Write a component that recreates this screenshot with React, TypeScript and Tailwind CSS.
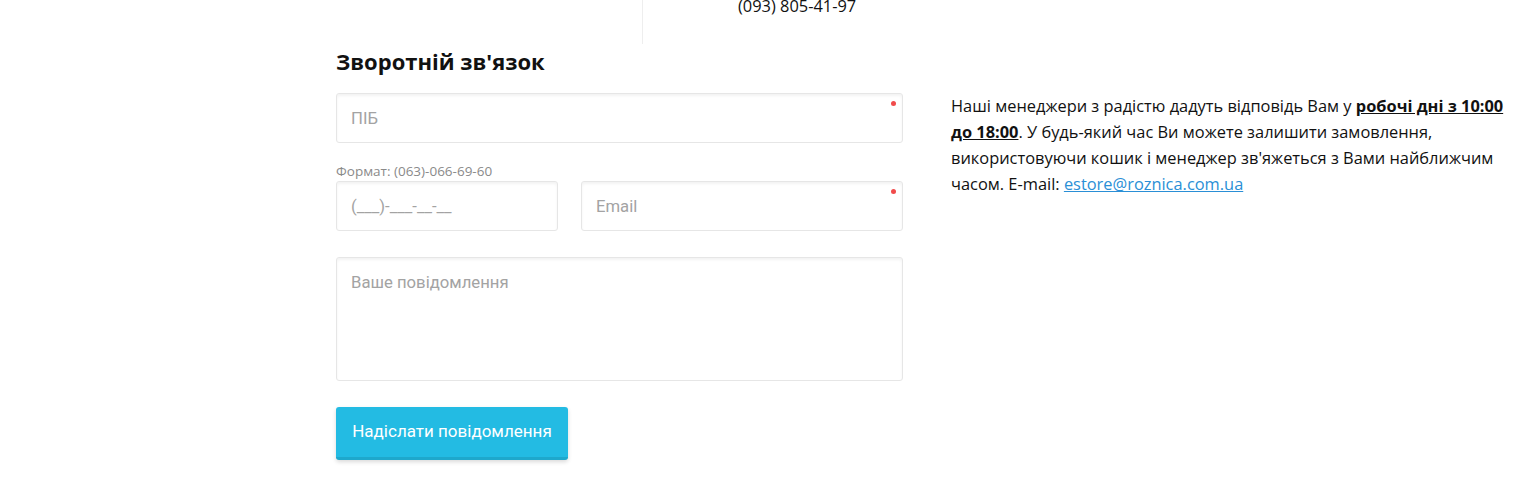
import React from 'react';

const ubuntu = "font-['Open_Sans','Noto_Sans',sans-serif]";
const roboto = "font-['Roboto','Liberation_Sans',sans-serif]";

const inputBase =
  "w-full h-[50px] px-[14px] rounded-[3px] border border-[#e6e6e6] bg-white shadow-[inset_0_2px_3px_rgba(0,0,0,0.05)] text-[16.7px] text-[#333] placeholder:text-[#a3a3a3] outline-none font-['Roboto','Liberation_Sans',sans-serif]";

const RequiredDot: React.FC = () => (
  <span className="absolute right-[7px] top-[8px] h-[5px] w-[5px] rounded-full bg-[#f14b4b]" />
);

const App: React.FC = () => {
  return (
    <div className="min-h-[487px] w-full bg-white">
      {/* top strip */}
      <div className="flex h-[44px]">
        <div className="w-[643px] shrink-0 border-r border-[#eeeeee]" />
        <div className={`pl-[95px] -mt-[4px] text-[16.4px] leading-[20px] text-[#111] ${ubuntu}`}>(093) 805-41-97</div>
      </div>

      <div className="flex pl-[336px]">
        {/* form */}
        <div className="w-[567px] shrink-0">
          <h2 className={`text-[22px] leading-[30px] font-bold text-[#111] ${ubuntu} mt-[2px]`}>Зворотній зв'язок</h2>

          <div className="relative mt-[17px]">
            <input className={inputBase} placeholder="ПІБ" />
            <RequiredDot />
          </div>

          <div className={`mt-[18px] text-[13.5px] leading-[20px] text-[#8a8a8a] ${ubuntu}`}>Формат: (063)-066-69-60</div>

          <div className="flex gap-[23px]">
            <div className="w-[222px] shrink-0">
              <input className={inputBase} placeholder="(___)-___-__-__" />
            </div>
            <div className="relative flex-1">
              <input className={inputBase} placeholder="Email" />
              <RequiredDot />
            </div>
          </div>

          <textarea
            className={`${inputBase} mt-[26px] block h-[124px] resize-none pt-[14px] leading-[22px]`}
            placeholder="Ваше повідомлення"
          />

          <button
            className={`mt-[26px] h-[53px] w-[232px] rounded-[3px] border-b-[3px] border-[#1ea8cc] bg-[#23bbe3] text-[17px] text-white shadow-[0_2px_4px_rgba(0,0,0,0.15)] ${roboto}`}
          >
            Надіслати повідомлення
          </button>
        </div>

        {/* info text */}
        <div className={`ml-[48px] mt-[49px] w-[565px] text-[16.4px] leading-[26px] text-[#111] ${ubuntu}`}>
          Наші менеджери з радістю дадуть відповідь Вам у{' '}
          <span className="font-bold underline">робочі дні з 10:00 до 18:00</span>. У будь-який час Ви можете залишити
          замовлення, використовуючи кошик і менеджер зв'яжеться з Вами найближчим часом. E-mail:{' '}
          <a href="#" className="text-[#2a8fd6] underline">estore@roznica.com.ua</a>
        </div>
      </div>
    </div>
  );
};

export default App;
